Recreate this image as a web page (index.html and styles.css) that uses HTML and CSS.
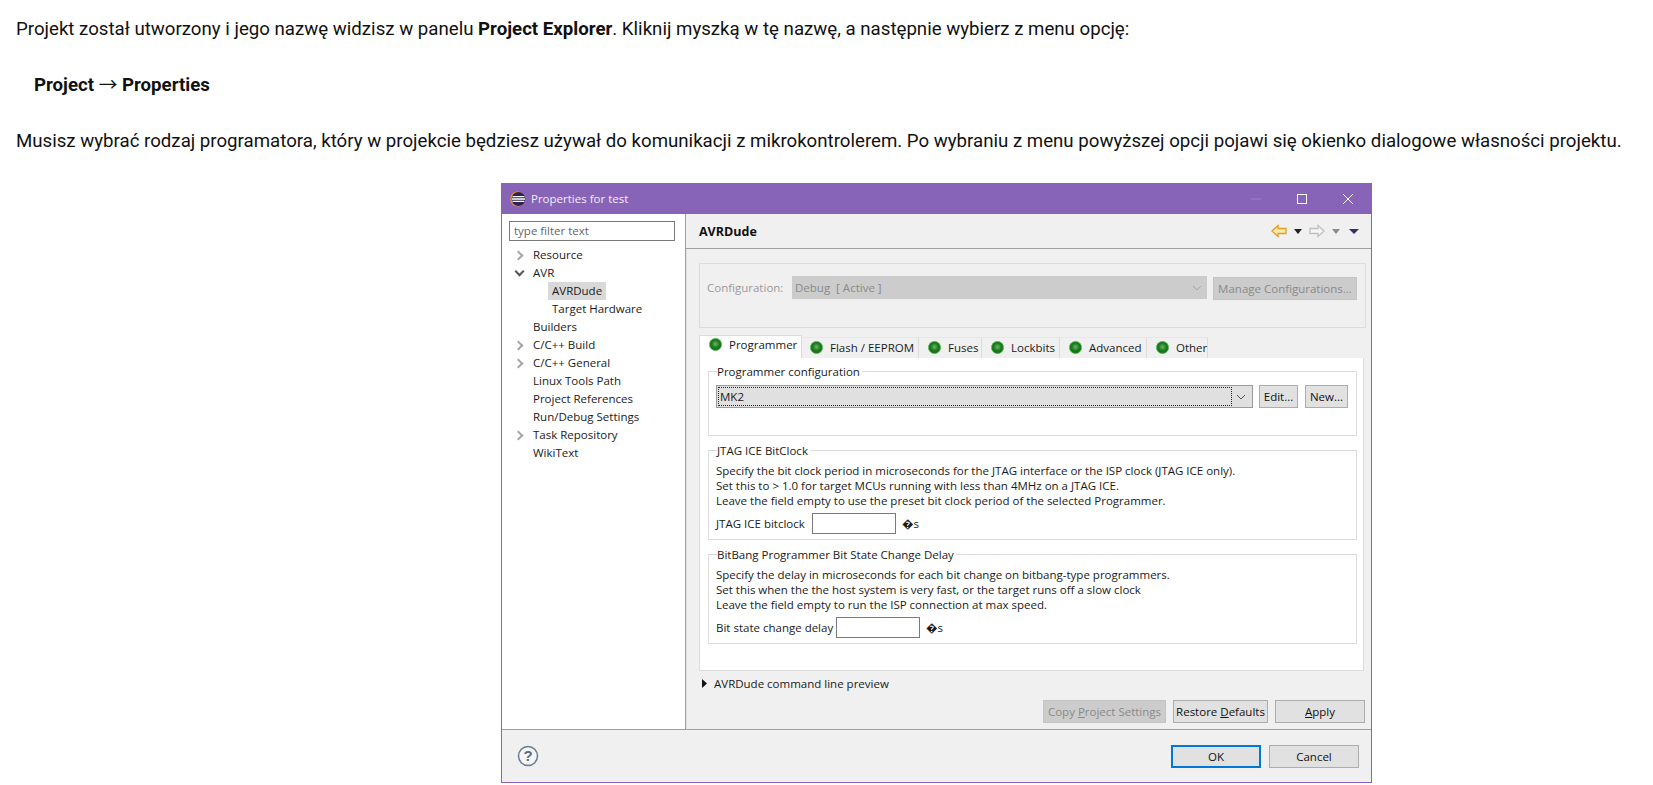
FILE: index.html
```html
<!DOCTYPE html>
<html lang="pl">
<head>
<meta charset="utf-8">
<title>Properties for test</title>
<link rel="stylesheet" href="styles.css">
</head>
<body>
<p class="para first">Projekt został utworzony i jego nazwę widzisz w panelu <b>Project Explorer</b>. Kliknij myszką w tę nazwę, a następnie wybierz z menu opcję:</p>
<p class="para indent"><b>Project</b> <span class="arrow">→</span> <b>Properties</b></p>
<p class="para third">Musisz wybrać rodzaj programatora, który w projekcie będziesz używał do komunikacji z mikrokontrolerem. Po wybraniu z menu powyższej opcji pojawi się okienko dialogowe własności projektu.</p>

<div class="dialog">
  <div class="titlebar">
    <svg class="eclipse" width="16" height="16" viewBox="0 0 16 16"><circle cx="7.6" cy="8" r="7.4" fill="#f7941e"/><circle cx="8.4" cy="8" r="6.9" fill="#2c2255"/><path d="M2.4 5.6h12M1.8 8h13.2M2.4 10.4h12" stroke="#fff" stroke-width="1.3"/></svg>
    <span class="title-text">Properties for test</span>
    <div class="winctl">
      <svg width="12" height="12" viewBox="0 0 12 12"><path d="M1 6h10" stroke="#9d84c9" stroke-width="1"/></svg>
      <svg width="12" height="12" viewBox="0 0 12 12"><rect x="1.5" y="1.5" width="9" height="9" fill="none" stroke="#fff"/></svg>
      <svg width="12" height="12" viewBox="0 0 12 12"><path d="M1 1l10 10M11 1L1 11" stroke="#fff" stroke-width="1"/></svg>
    </div>
  </div>
  <div class="main">
    <aside class="side">
      <div class="filter">type filter text</div>
      <ul class="tree">
        <li><i class="tw closed"></i>Resource</li>
        <li><i class="tw open"></i>AVR</li>
        <li class="sub"><span class="sel">AVRDude</span></li>
        <li class="sub">Target Hardware</li>
        <li><i class="tw"></i>Builders</li>
        <li><i class="tw closed"></i>C/C++ Build</li>
        <li><i class="tw closed"></i>C/C++ General</li>
        <li><i class="tw"></i>Linux Tools Path</li>
        <li><i class="tw"></i>Project References</li>
        <li><i class="tw"></i>Run/Debug Settings</li>
        <li><i class="tw closed"></i>Task Repository</li>
        <li><i class="tw"></i>WikiText</li>
      </ul>
    </aside>
    <section class="content">
      <header class="head">
        <h1 class="head-title">AVRDude</h1>
        <div class="nav">
          <svg width="16" height="14" viewBox="0 0 16 14"><path d="M1 7L7 1.5V4.5H15V9.5H7V12.5Z" fill="#fdeab0" stroke="#e0a020" stroke-width="1.3"/></svg>
          <i class="caret dark"></i>
          <svg class="fwd" width="16" height="14" viewBox="0 0 16 14"><path d="M15 7L9 1.5V4.5H1V9.5H9V12.5Z" fill="#f4f4f4" stroke="#c0c0c0" stroke-width="1.3"/></svg>
          <i class="caret grey"></i>
          <i class="caret wide"></i>
        </div>
      </header>
      <div class="pane">
        <div class="config">
          <span class="cfg-label">Configuration:</span>
          <div class="cfg-combo"><span>Debug  [ Active ]</span><svg width="10" height="6" viewBox="0 0 10 6"><path d="M1 1l4 4 4-4" fill="none" stroke="#a8a8a8"/></svg></div>
          <div class="cfg-btn">Manage Configurations...</div>
        </div>
        <div class="tabs">
          <div class="tab active"><i class="led"></i>Programmer</div>
          <div class="tab t-flash"><i class="led"></i>Flash / EEPROM</div>
          <div class="tab t-fuses"><i class="led"></i>Fuses</div>
          <div class="tab t-lock"><i class="led"></i>Lockbits</div>
          <div class="tab t-adv"><i class="led"></i>Advanced</div>
          <div class="tab t-other"><i class="led"></i>Other</div>
        </div>
        <div class="panel">
          <fieldset class="group g1">
            <legend>Programmer configuration</legend>
            <div class="prog-row">
              <div class="prog-combo"><span class="prog-value">MK2</span><svg width="10" height="6" viewBox="0 0 10 6"><path d="M1 1l4 4 4-4" fill="none" stroke="#555"/></svg></div>
              <div class="btn edit">Edit...</div>
              <div class="btn new">New...</div>
            </div>
          </fieldset>
          <fieldset class="group g2">
            <legend>JTAG ICE BitClock</legend>
            <div class="desc">Specify the bit clock period in microseconds for the JTAG interface or the ISP clock (JTAG ICE only).<br>Set this to &gt; 1.0 for target MCUs running with less than 4MHz on a JTAG ICE.<br>Leave the field empty to use the preset bit clock period of the selected Programmer.</div>
            <div class="field"><span class="lbl-jtag">JTAG ICE bitclock</span><div class="input"></div><span class="unit">�s</span></div>
          </fieldset>
          <fieldset class="group g2">
            <legend>BitBang Programmer Bit State Change Delay</legend>
            <div class="desc">Specify the delay in microseconds for each bit change on bitbang-type programmers.<br>Set this when the the host system is very fast, or the target runs off a slow clock<br>Leave the field empty to run the ISP connection at max speed.</div>
            <div class="field"><span class="lbl-bit">Bit state change delay</span><div class="input"></div><span class="unit">�s</span></div>
          </fieldset>
        </div>
        <div class="preview"><svg width="5" height="9" viewBox="0 0 5 9"><path d="M0 0l5 4.5L0 9z" fill="#111"/></svg><span>AVRDude command line preview</span></div>
        <div class="actions">
          <div class="btn disabled copy">Copy <u>P</u>roject Settings</div>
          <div class="btn restore">Restore <u>D</u>efaults</div>
          <div class="btn apply"><u>A</u>pply</div>
        </div>
      </div>
    </section>
  </div>
  <footer class="foot">
    <svg class="help" width="22" height="22" viewBox="0 0 22 22"><circle cx="11" cy="11" r="9.5" fill="#f5f6f8" stroke="#6a7a96" stroke-width="1.5"/><text x="11" y="16" text-anchor="middle" class="help-q">?</text></svg>
    <div class="foot-btns">
      <div class="btn ok">OK</div>
      <div class="btn cancel">Cancel</div>
    </div>
  </footer>
</div>
</body>
</html>
```
FILE: styles.css
```css
html, body { margin: 0; padding: 0; background: #fff; }
body { font-family: Roboto, "Liberation Sans", sans-serif; color: #111; height: 785px; overflow: hidden; }
.para { margin: 0 0 29px 16px; font-size: 18.667px; line-height: 27px; white-space: nowrap; }
.first { padding-top: 16px; margin-bottom: 29px; }
.indent { margin-left: 34px; margin-bottom: 29px; }
.third { margin-bottom: 28px; }
.para b { font-weight: 700; }
.arrow { font-family: "Noto Sans CJK SC", sans-serif; line-height: 1; }

.dialog { box-sizing: border-box; width: 871px; height: 600px; margin: 0 0 0 501px; border: 1px solid #8764b8; border-top: 0; display: flex; flex-direction: column; font-family: "Open Sans", "Noto Sans", sans-serif; font-size: 11.5px; color: #1a1a1a; background: #f0f0f0; }
.titlebar { height: 31px; margin: 0 -1px; background: #8764b8; display: flex; align-items: center; padding-left: 9px; color: #f2eef8; }
.eclipse { flex: none; }
.title-text { margin-left: 5px; }
.winctl { margin-left: auto; display: flex; gap: 34px; padding-right: 18px; align-items: center; }

.main { flex: 1; display: flex; min-height: 0; border-bottom: 1px solid #a0a0a0; }
.side { width: 184px; flex: none; background: #fff; border-right: 1px solid #a0a0a0; padding: 7px 0 0 7px; box-sizing: border-box; }
.filter { box-sizing: border-box; width: 166px; height: 20px; border: 1px solid #7a7a7a; padding-left: 4px; line-height: 18px; color: #666; }
.tree { list-style: none; margin: 5px 0 0; padding: 0; }
.tree li { height: 18px; line-height: 18px; padding-left: 24px; position: relative; white-space: nowrap; }
.tree li.sub { padding-left: 43px; }
.tw { position: absolute; left: 6px; top: 5px; width: 9px; height: 9px; }
.tw.closed::before { content: ""; position: absolute; left: 0; top: 1px; width: 5px; height: 5px; border-top: 2px solid #a6a6a6; border-right: 2px solid #a6a6a6; transform: rotate(45deg); }
.tw.open::before { content: ""; position: absolute; left: 1px; top: -1px; width: 5px; height: 5px; border-bottom: 2px solid #555; border-right: 2px solid #555; transform: rotate(45deg); }
.sel { display: inline-block; background: #d9d9d9; padding: 0 4px; margin-left: -4px; height: 18px; }

.content { flex: 1; min-width: 0; display: flex; flex-direction: column; }
.head { height: 35px; box-sizing: border-box; flex: none; border-bottom: 1px solid #a0a0a0; display: flex; align-items: center; padding: 0 12px 0 13px; }
.head-title { margin: 0; font-size: 12.5px; font-weight: 700; color: #111; }
.nav { margin-left: auto; display: flex; align-items: center; }
.caret { display: block; width: 0; height: 0; border-left: 4px solid transparent; border-right: 4px solid transparent; border-top: 5px solid #222; margin-left: 7px; }
.fwd { margin-left: 7px; }
.caret.grey { border-top-color: #8a8a8a; }
.caret.wide { border-left-width: 5px; border-right-width: 5px; border-top: 5px solid #3d2b66; margin-left: 9px; }

.pane { flex: 1; padding: 14px 6px 0 12px; min-height: 0; border-left: 1px solid #e4e4e4; box-sizing: border-box; }
.config { box-sizing: border-box; height: 65px; margin-right: -1px; border: 1px solid #dcdcdc; display: flex; align-items: flex-start; padding: 12px 8px 0 7px; color: #9a9a9a; }
.cfg-label { line-height: 24px; width: 85px; flex: none; }
.cfg-combo { width: 415px; height: 23px; line-height: 21px; background: #cccccc; display: flex; justify-content: space-between; align-items: center; padding: 0 5px 0 3px; box-sizing: border-box; color: #8a8a8a; white-space: pre; flex: none; }
.cfg-btn { margin: 1px 0 0 6px; width: 144px; height: 23px; line-height: 21px; background: #cccccc; box-sizing: border-box; border: 1px solid #c4c4c4; text-align: center; color: #8a8a8a; flex: none; }

.tabs { display: flex; align-items: flex-end; height: 23px; margin-top: 7px; }
.tab { box-sizing: border-box; height: 21px; border-right: 1px solid #dcdcdc; border-top: 1px solid #e8e8e8; display: flex; align-items: center; padding: 0 0 2px 9px; white-space: nowrap; }
.tab.active { width: 103px; height: 23px; background: #fff; border: 1px solid #dcdcdc; border-bottom: 0; padding: 0 0 0 9px; align-items: flex-start; line-height: 18px; }
.t-flash { width: 117px; padding-left: 8px; }
.t-fuses { width: 63px; }
.t-lock { width: 78px; }
.t-adv { width: 87px; }
.t-other { width: 61px; }
.led { flex: none; width: 13px; height: 13px; border-radius: 50%; margin-right: 7px; background: radial-gradient(circle at 50% 45%, #6fb36f 0, #1c7d1c 45%, #0d5e0d 100%); border: 1px solid #3fae3f; box-sizing: border-box; }
.active .led { margin-top: 2px; }

.panel { box-sizing: border-box; height: 313px; width: 665px; background: #fff; border: 1px solid #dcdcdc; border-top: 0; padding: 6px 6px 0 8px; }
.group { box-sizing: border-box; margin: 0; border: 1px solid #dcdcdc; padding: 0 8px 0 7px; min-width: 0; }
.group legend { padding: 0 2px 0 0; margin-left: 1px; line-height: 15px; height: 15px; }
.g1 { height: 72px; }
.g2 { height: 97px; margin-top: 7px; }
.prog-row { display: flex; margin-top: 6px; align-items: flex-start; }
.prog-combo { box-sizing: border-box; width: 537px; height: 23px; background: #e0e0e0; border: 1px solid #9a9a9a; display: flex; align-items: center; justify-content: space-between; padding-right: 6px; flex: none; }
.prog-value { box-sizing: border-box; width: 514px; height: 19px; margin-left: 1px; border: 1px dotted #222; line-height: 18px; padding-left: 1px; }
.btn { box-sizing: border-box; height: 23px; line-height: 21px; text-align: center; background: #e1e1e1; border: 1px solid #adadad; white-space: nowrap; color: #111; flex: none; }
.edit { width: 39px; margin-left: 6px; }
.new { width: 43px; margin-left: 7px; }
.desc { line-height: 15px; margin-top: 5px; white-space: nowrap; }
.field { display: flex; align-items: center; margin-top: 5px; height: 21px; }
.lbl-jtag { width: 96px; flex: none; white-space: nowrap; }
.lbl-bit { width: 120px; flex: none; white-space: nowrap; }
.input { box-sizing: border-box; width: 84px; height: 21px; background: #fff; border: 1px solid #7a7a7a; margin: 0 6px 0 0; }
.unit { margin-left: 0; }

.preview { display: flex; align-items: center; height: 15px; margin-top: 5px; margin-left: 3px; }
.preview span { margin-left: 7px; }
.actions { display: flex; gap: 7px; margin-top: 9px; padding-left: 344px; }
.copy { width: 123px; background: #cccccc; border-color: #c4c4c4; color: #8a8a8a; }
.restore { width: 95px; }
.apply { width: 90px; }

.foot { height: 52px; flex: none; display: flex; align-items: center; padding: 0 12px 0 15px; box-sizing: border-box; }
.help-q { font: 700 15px "Liberation Sans", sans-serif; fill: #5a6a86; }
.foot-btns { margin-left: auto; display: flex; gap: 8px; }
.ok { width: 90px; border: 2px solid #0078d7; line-height: 19px; }
.cancel { width: 90px; }
```
